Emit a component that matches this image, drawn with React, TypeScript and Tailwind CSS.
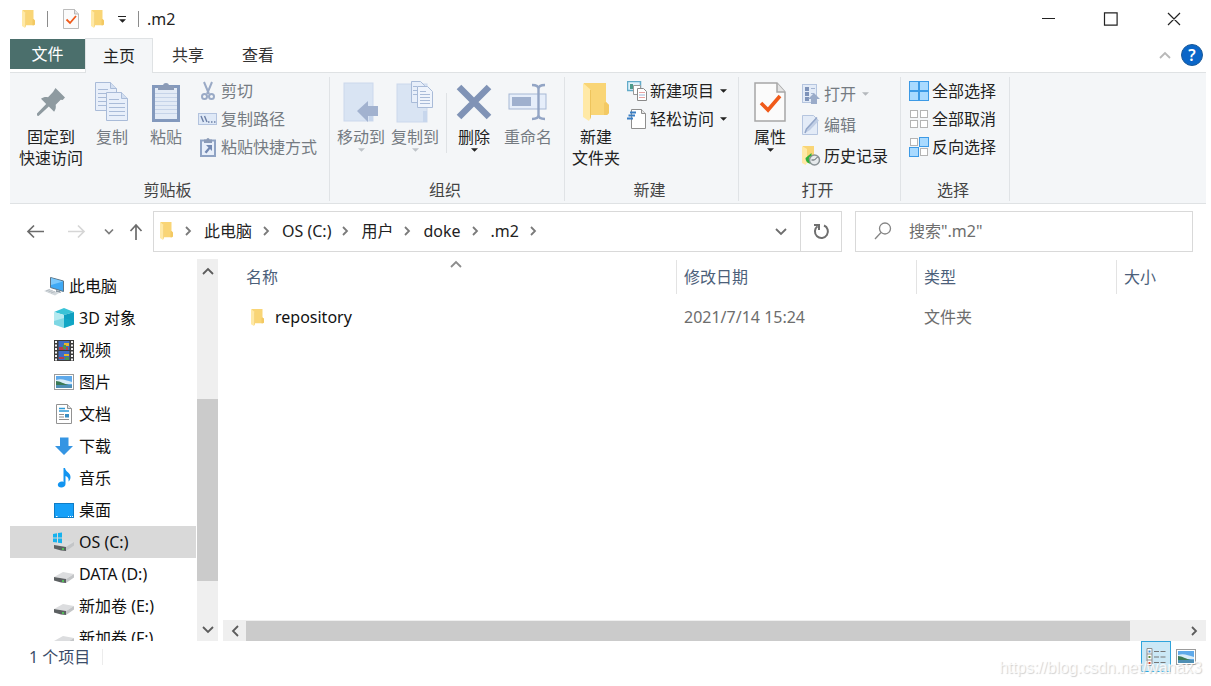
import type { ReactNode } from "react";

const Folder = ({ className = "w-4 h-5" }: { className?: string }) => (
  <svg viewBox="0 0 26 38" preserveAspectRatio="none" className={className}>
    <path d="M1 0h22v19l3 3v8l-2 2H6L1 28z" fill="#f9d576" />
    <path d="M23 19l3 3v8l-2 2h-3V20z" fill="#f3c963" />
    <path d="M0 0l8 7v27l-2 4-6-4z" fill="#ffe9a6" />
    <path d="M7 6.500l1 .5v27l-1 2.500z" fill="#eec45c" />
  </svg>
);

const CheckPage = ({ className = "w-4 h-5" }: { className?: string }) => (
  <svg viewBox="0 0 32 40" preserveAspectRatio="none" className={className}>
    <path d="M1 1h22l8 9v29H1z" fill="#fbfbfb" stroke="#a6a6a6" strokeWidth="1.500" />
    <path d="M23 1v9h8" fill="#e4e4e4" stroke="#a6a6a6" strokeWidth="1.500" />
    <path d="M7 21l7 7 12-14" fill="none" stroke="#f05a1a" strokeWidth="3.600" />
  </svg>
);

const Pin = () => (
  <svg viewBox="0 0 28 28" className="w-7 h-7">
    <path d="M18.500 0L28 9.500l-2.300 2.500-2-.2-5 5c.4 2.600 0 4.800-1.600 7l-5.300-5.200L1.500 28 0 27.500v-2l9.200-9.600L4 10.800c2-1.600 4.400-2.200 7-1.600l5-5.200z" fill="#8e9aa0" />
  </svg>
);

const Sheet = ({ x, y }: { x: number; y: number }) => (
  <g transform={`translate(${x} ${y})`}>
    <path d="M.5.5h15l6 6v22H.5z" fill="#e8effa" stroke="#a9bbd8" />
    <path d="M15.500.5v6h6" fill="#d3dff1" stroke="#a9bbd8" />
    <path d="M3 7.500h10M3 11.500h16M3 15.500h16M3 19.500h16M3 23.500h16" stroke="#a9bbd8" />
  </g>
);

const Copy = () => (
  <svg viewBox="0 0 34 40" className="w-[34px] h-10">
    <Sheet x={0} y={0} />
    <Sheet x={11} y={10} />
  </svg>
);

const Paste = () => (
  <svg viewBox="0 0 30 40" className="w-[30px] h-10">
    <rect x="2.500" y="4.500" width="25" height="34" fill="#e3ebf6" stroke="#8399bd" strokeWidth="3" />
    <path d="M4 11.500h22M4 15.500h22M4 19.500h22M4 23.500h22M4 27.500h22M4 31.500h22" stroke="#c5d3e8" />
    <path d="M7 8V4h5a3 3 0 0 1 6 0h5v4z" fill="#8b9bb7" />
  </svg>
);

const Scissors = () => (
  <svg viewBox="0 0 14 20" className="w-3.5 h-5" fill="none" stroke="#9aaac6">
    <path d="M3 1l5 12M11 1L6 13" strokeWidth="2" />
    <circle cx="3.500" cy="15.500" r="2.500" strokeWidth="2" />
    <circle cx="10.500" cy="15.500" r="2.500" strokeWidth="2" />
  </svg>
);

const CopyPath = () => (
  <svg viewBox="0 0 20 14" className="w-5 h-3.5">
    <rect x=".5" y="1.500" width="18" height="11" fill="#dfe9f7" stroke="#b3c3de" />
    <path d="M3 4l2.500 6M6.500 4L9 10" stroke="#6c7fa5" strokeWidth="1.400" />
    <path d="M10 10h1.500M13 10h1.500M16 10h1.500" stroke="#6c7fa5" strokeWidth="1.500" />
  </svg>
);

const PasteShortcut = () => (
  <svg viewBox="0 0 16 20" className="w-4 h-5">
    <rect x="1" y="3.500" width="14" height="15.500" fill="#e8effa" stroke="#8fa3c4" strokeWidth="2" />
    <path d="M4 6V2.500h2.500a1.500 1.500 0 0 1 3 0H12V6z" fill="#8b9bb7" />
    <path d="M6 8h6v6l-2-2-3.500 4.500-2-1.500 4-4.500z" fill="#7389b2" />
  </svg>
);

const MoveTo = () => (
  <svg viewBox="0 0 36 40" className="w-9 h-10">
    <rect x="1" y="1" width="29" height="38" fill="#d9e4f3" stroke="#cbd8ec" />
    <path d="M26 26h4v13h-4z" fill="#c7d6ec" />
    <path d="M14 29l11-10v5h10v10H25v6z" fill="#a2b2cf" />
  </svg>
);

const CopyTo = () => (
  <svg viewBox="0 0 38 42" className="w-[38px] h-[42px]">
    <rect x="1" y="3" width="30" height="38" fill="#d9e4f3" stroke="#cbd8ec" />
    <path d="M27 30h4v11h-4z" fill="#c7d6ec" />
    <path d="M15.500.5h9l4 4v17h-13z" fill="#e8effa" stroke="#a9bbd8" />
    <path d="M21.500 5.500h10l5 5v16h-15z" fill="#eff4fc" stroke="#a9bbd8" />
    <path d="M17 5.500h4M17 9.500h4M17 13.500h4M24 10.500h6M24 13.500h10M24 16.500h10M24 19.500h10M24 22.500h10" stroke="#a9bbd8" />
  </svg>
);

const Delete = () => (
  <svg viewBox="0 0 36 36" className="w-9 h-9">
    <path d="M3 3l30 30M33 3L3 33" stroke="#8093b6" strokeWidth="6.500" />
  </svg>
);

const Rename = () => (
  <svg viewBox="0 0 40 38" className="w-10 h-[38px]">
    <rect x="1" y="11" width="37" height="15" fill="#e6eefa" stroke="#a6b7d4" />
    <rect x="4" y="14" width="19" height="9" fill="#9fb0ce" />
    <path d="M24 2c4 0 6.500.6 6.500 4v26c0 3.400-2.500 4-6.500 4M37 2c-4 0-6.500.6-6.500 4v26c0 3.400 2.500 4 6.500 4" fill="none" stroke="#93a5c5" strokeWidth="2.400" />
  </svg>
);

const NewItem = () => (
  <svg viewBox="0 0 20 20" className="w-5 h-5">
    <path d="M.5.5h13v9H.5z" fill="#dff2fb" stroke="#62abc9" strokeWidth="1.500" />
    <path d="M3 3h3v5H3z" fill="#4a9a8a" />
    <path d="M6.500 4.500h7v9h-7z" fill="#fff" stroke="#9a9a9a" />
    <path d="M10.500 7.500h6l3 3v9h-9z" fill="#fff" stroke="#8a8a8a" />
    <path d="M12 11.500h6M12 16.500h6" stroke="#e9a3a3" />
    <path d="M12 14h6" stroke="#9db7da" />
  </svg>
);

const EasyAccess = () => (
  <svg viewBox="0 0 20 22" className="w-5 h-[22px]">
    <path d="M4.500 1.500h10l4 4v15h-14z" fill="#fff" stroke="#8e8e8e" />
    <path d="M14.500 1.500v4h4" fill="#e6e6e6" stroke="#8e8e8e" />
    <path d="M3 4.500h6M1.500 7.500h6.500M0 10.500h6" stroke="#3b7fc4" strokeWidth="2" />
  </svg>
);

const Open = () => (
  <svg viewBox="0 0 18 22" className="w-[18px] h-[22px]">
    <rect x=".5" y="1.500" width="14" height="18" fill="#e3ebf7" stroke="#b5c5df" />
    <path d="M3 4h4v4H3zM3 9h4v4H3zM3 14h4v4H3z" fill="#7e93b9" />
    <path d="M9 5.500h4M9 10.500h3" stroke="#a4b5d2" />
    <path d="M12 10l6 6h-3v5H9v-5H6z" fill="#9aabc9" />
  </svg>
);

const Edit = () => (
  <svg viewBox="0 0 18 20" className="w-[18px] h-5">
    <path d="M.5.5h11l4 4v15H.5z" fill="#e3ebf7" stroke="#b5c5df" />
    <path d="M3 18l2-5L14 3l3 2.500L8 15z" fill="#c0cee5" />
    <path d="M3 18l1.500-4L15 2.500" stroke="#93a6c8" fill="none" strokeWidth="1.500" />
  </svg>
);

const History = () => (
  <svg viewBox="0 0 19 20" className="w-[19px] h-5">
    <path d="M1 0h11v17H1z" fill="#f9d576" />
    <path d="M0 0l5 3v14l-1.500 2L0 17z" fill="#ffe9a6" />
    <circle cx="12.500" cy="14" r="5" fill="#e6eaec" stroke="#8a9296" strokeWidth="1.500" />
    <path d="M12.500 14l3-3M12.500 14h-3" fill="none" stroke="#51595d" />
    <path d="M3.500 12l6-5v3c-3 .5-3.500 3.500-1 8-3.500-1-5-3-5-6z" fill="#2fae3c" />
  </svg>
);

/* Four tiles; `on` marks the ones drawn in blue */
const Tiles = ({ on }: { on: boolean[] }) => (
  <svg viewBox="0 0 20 20" className="w-5 h-5">
    {on.map((lit, i) => {
      const x = (i % 2) * 10;
      const y = i < 2 ? 0 : 10;
      return lit ? (
        <rect key={i} x={x + 0.5} y={y + 0.5} width="9" height="9" fill="#a9daff" stroke="#3c9ae6" />
      ) : (
        <rect key={i} x={x + 1.5} y={y + 1.5} width="7" height="7" fill="#fff" stroke="#b4b4b4" />
      );
    })}
  </svg>
);

const Chevron = ({ dir = "down", className = "" }: { dir?: "up" | "down" | "left" | "right"; className?: string }) => {
  const d = {
    up: "M1 9l5-5 5 5",
    down: "M1 4l5 5 5-5",
    left: "M9 1L4 6l5 5",
    right: "M4 2l4 4-4 4",
  }[dir];
  return (
    <svg viewBox="0 0 12 12" className={`w-3 h-3 ${className}`} fill="none" stroke="currentColor" strokeWidth="1.800">
      <path d={d} />
    </svg>
  );
};

const Caret = ({ className = "" }: { className?: string }) => (
  <svg viewBox="0 0 8 4" className={`w-[7px] h-1 ${className}`}>
    <path d="M0 0h8L4 4z" fill="currentColor" />
  </svg>
);

const PictureIcon = () => (
  <svg viewBox="0 0 20 16" className="w-5 h-4">
    <rect x=".5" y=".5" width="19" height="15" fill="#fff" stroke="#9c9c9c" />
    <path d="M2 2h16v12H2z" fill="#5ea9ea" />
    <path d="M2 6c5-2 10 0 16 2v2H2z" fill="#d8ecf8" />
    <path d="M2 7c4 0 8 3 13 4H2z" fill="#3c7a55" />
    <path d="M2 11h16v3H2z" fill="#4f8fb4" />
  </svg>
);

const PcIcon = () => (
  <svg viewBox="0 0 20 20" className="w-5 h-5">
    <path d="M6.500 1.500l13 3.500v10.500l-13-4z" fill="#3fa9f5" stroke="#5c7486" />
    <path d="M7 2l12 3.500L7 9z" fill="#7cc8fb" />
    <path d="M12 14l4 1 1 2-5-1z" fill="#8a98a2" />
    <path d="M0 15l5-2 10 4-4 2.500z" fill="#d2d8dc" />
    <path d="M2 15l4-1.500M4.500 16l4-1.500M7 17l4-1.500" stroke="#aab2b8" strokeWidth=".7" />
  </svg>
);

const CubeIcon = () => (
  <svg viewBox="0 0 20 20" className="w-5 h-5">
    <path d="M0 4l10-4 10 4-10 3z" fill="#39c3d7" />
    <path d="M0 4l10 3v13L0 16.500z" fill="#b5eaf0" />
    <path d="M20 4L10 7v13l10-3.500z" fill="#0e9fc0" />
    <path d="M0 13l10-3 10 3v3.500L10 20 0 16.500z" fill="#17b5cf" opacity=".35" />
  </svg>
);

const VideoIcon = () => (
  <svg viewBox="0 0 20 21" className="w-5 h-[21px]">
    <path d="M0 0h20v21H0z" fill="#3c3c3c" />
    <path d="M2 1v20M18 1v20" stroke="#f4f4f4" strokeWidth="2" strokeDasharray="2 1.500" />
    <path d="M4.500 1h11v9h-11zM4.500 11h11v9h-11z" fill="#3f6cc4" />
    <path d="M10 3h5v3h-5zM10 14h5v2h-5z" fill="#e8b52d" />
    <path d="M5 7h4l2 3H5zM5 17h5v2H5zM12 7h2v3h-2z" fill="#b8404a" />
    <path d="M9 5h3v4H9zM11 17h4v3h-4z" fill="#4b9650" />
  </svg>
);

const DocIcon = () => (
  <svg viewBox="0 0 16 20" className="w-4 h-5">
    <path d="M.5.5h11l4 4v15H.5z" fill="#fff" stroke="#929292" />
    <path d="M11.500.5v4h4" fill="#e2e2e2" stroke="#929292" />
    <path d="M3 4.500h6M3 7h10" stroke="#2e9bd8" strokeWidth="1.500" />
    <path d="M3 10.500h5M3 13h5M3 15.500h10" stroke="#8f8f8f" />
    <path d="M9 10h4v3.500H9z" fill="#3a8fc4" />
  </svg>
);

const DownloadIcon = () => (
  <svg viewBox="0 0 18 18" className="w-[18px] h-[18px]">
    <path d="M5 .5h8.500V9H18l-9 9-9-9h5z" fill="#3595e3" />
  </svg>
);

const MusicIcon = () => (
  <svg viewBox="0 0 14 20" className="w-3.5 h-5">
    <path d="M6.500 0H8c.5 4 5.500 4.500 5.500 9 0 2-.8 3.500-2 4.500.6-3-.6-4.800-3-5.500v8c0 2-1.800 3.500-4.200 3.500C2 19.500.8 18.300.8 16.800c0-2 2-3.300 4-3.300.6 0 1.200.1 1.700.4z" fill="#1294f0" />
  </svg>
);

const DesktopIcon = () => (
  <svg viewBox="0 0 20 15" className="w-5 h-[15px]">
    <rect x=".5" y=".5" width="19" height="14" fill="#16a0f8" stroke="#0f7dc6" />
    <path d="M2 13.500h1.500M14 13.500h1M16 13.500h1M18 13.500h1" stroke="#fff" />
  </svg>
);

const DriveIcon = ({ system = false }: { system?: boolean }) => (
  <svg viewBox="0 0 22 20" className="w-[22px] h-5">
    <path d="M1 13l9-5 11 2-8 5z" fill="#dcdddf" />
    <path d="M1 13l12 2v4l-5-.5-7-2z" fill="#5c6062" />
    <path d="M13 15l8-5v3.500L13 19z" fill="#c3c5c7" />
    <path d="M9 17h2" stroke="#4fdc55" strokeWidth="1.500" />
    {system && <path d="M0 2l4-.7V5.500H0zM5 1.100L9 .5v5H5zM0 6.500h4v4l-4-.6zM5 6.500h4v4.800l-4-.6z" fill="#16b2ee" />}
  </svg>
);

type BigButtonProps = { icon: ReactNode; label: ReactNode; disabled?: boolean; caret?: boolean; width?: string };

const BigButton = ({ icon, label, disabled, caret, width = "w-[54px]" }: BigButtonProps) => (
  <button disabled={disabled} className={`${width} flex flex-col items-center shrink-0 text-center leading-[21px] whitespace-nowrap text-[#222] disabled:text-[#757b82]`}>
    <span className="h-[50px] flex items-center justify-center">{icon}</span>
    <span>{label}</span>
    {caret && <Caret className={disabled ? "text-[#bfc3c8]" : "text-[#222]"} />}
  </button>
);

type SmallButtonProps = { icon: ReactNode; label: string; disabled?: boolean; caret?: boolean; height?: string };

const SmallButton = ({ icon, label, disabled, caret, height = "h-7" }: SmallButtonProps) => (
  <button disabled={disabled} className={`${height} flex items-center whitespace-nowrap text-[#222] disabled:text-[#757b82]`}>
    <span className="w-5 mr-[3px] flex justify-center">{icon}</span>
    {label}
    {caret && <Caret className={disabled ? "ml-1.5 text-[#b4b8bd]" : "ml-1.5"} />}
  </button>
);

const Group = ({ title, width, children }: { title: string; width: string; children: ReactNode }) => (
  <section className={`${width} shrink-0 flex flex-col justify-between border-r border-[#e0e3e6]`}>
    <div className="flex pl-1">{children}</div>
    <h2 className="text-center leading-5 pb-px pr-1 text-[#444]">{title}</h2>
  </section>
);

const Ribbon = () => (
  <div className="flex h-[132px] bg-[#f4f6f8] border-y border-[#dfe2e4] pt-1 pb-0.5 overflow-hidden">
    <Group title="剪贴板" width="w-[320px]">
      <BigButton width="w-[74px]" icon={<Pin />} label={<>固定到<br />快速访问</>} />
      <BigButton width="w-12" disabled icon={<Copy />} label="复制" />
      <BigButton width="w-[60px]" disabled icon={<Paste />} label="粘贴" />
      <div className="pl-0.5">
        <SmallButton disabled icon={<Scissors />} label="剪切" />
        <SmallButton disabled icon={<CopyPath />} label="复制路径" />
        <SmallButton disabled icon={<PasteShortcut />} label="粘贴快捷方式" />
      </div>
    </Group>
    <Group title="组织" width="w-[235px]">
      <BigButton disabled caret icon={<MoveTo />} label="移动到" />
      <BigButton disabled caret icon={<CopyTo />} label="复制到" />
      <div className="w-px h-[60px] mt-4 ml-1 bg-[#dfe2e5]" />
      <BigButton caret icon={<Delete />} label="删除" />
      <BigButton disabled icon={<Rename />} label="重命名" />
    </Group>
    <Group title="新建" width="w-[174px]">
      <BigButton icon={<Folder className="w-[26px] h-[38px]" />} label={<>新建<br />文件夹</>} />
      <div className="pl-1">
        <SmallButton caret icon={<NewItem />} label="新建项目" />
        <SmallButton caret icon={<EasyAccess />} label="轻松访问" />
      </div>
    </Group>
    <Group title="打开" width="w-[162px]">
      <BigButton caret icon={<CheckPage className="w-8 h-10" />} label="属性" />
      <div className="pl-1 pt-px">
        <SmallButton height="h-[31px]" disabled caret icon={<Open />} label="打开" />
        <SmallButton height="h-[31px]" disabled icon={<Edit />} label="编辑" />
        <SmallButton height="h-[31px]" icon={<History />} label="历史记录" />
      </div>
    </Group>
    <Group title="选择" width="w-[109px]">
      <div className="pl-1">
        <SmallButton icon={<Tiles on={[true, true, true, true]} />} label="全部选择" />
        <SmallButton icon={<Tiles on={[false, false, false, false]} />} label="全部取消" />
        <SmallButton icon={<Tiles on={[false, true, true, false]} />} label="反向选择" />
      </div>
    </Group>
  </div>
);

const TitleBar = () => (
  <header className="h-[38px] flex items-center justify-between">
    <div className="flex items-center pl-3">
      <Folder className="w-[13px] h-[18px]" />
      <span className="w-px h-4 ml-3 bg-[#8c8c8c]" />
      <button aria-label="属性" className="ml-[15px]"><CheckPage /></button>
      <button aria-label="新建文件夹" className="ml-3"><Folder className="w-[13px] h-[18px]" /></button>
      <button aria-label="自定义快速访问工具栏" className="ml-3.5 flex flex-col items-center gap-0.5 text-[#222]">
        <span className="w-2 h-px bg-[#222]" />
        <Caret />
      </button>
      <span className="w-px h-4 ml-3 bg-[#8c8c8c]" />
      <h1 className="ml-2 text-[#222]">.m2</h1>
    </div>
    <svg viewBox="0 0 140 14" className="w-[140px] h-3.5 mr-[25px]" fill="none" stroke="#222" strokeWidth="1.200">
      <path d="M1 6.500h13M63.500.9h12.600v12.200H63.500zM127 1l12 12M139 1l-12 12" />
    </svg>
  </header>
);

const Tabs = () => (
  <nav className="h-[34px] flex items-center justify-between">
    <div className="flex self-stretch">
      <button className="w-[75px] h-[30px] mt-px bg-[#4b6f6c] text-white">文件</button>
      <button className="w-[68px] h-[35px] relative z-10 border border-b-0 border-[#dfe2e4] bg-[#f4f6f8] text-[#222]">主页</button>
      <button className="w-[70px] text-[#333]">共享</button>
      <button className="w-[70px] text-[#333]">查看</button>
    </div>
    <div className="flex items-center gap-2.5 pr-[3px]">
      <Chevron dir="up" className="text-[#b8b8b8]" />
      <button className="w-[22px] h-[22px] rounded-full border border-[#1b5a99] bg-[#0a66c8] text-white leading-5 font-semibold">?</button>
    </div>
  </nav>
);

const crumbs = ["此电脑", "OS (C:)", "用户", "doke", ".m2"];

const AddressRow = () => (
  <div className="flex items-center h-[54px] pr-[13px]">
    <svg viewBox="0 0 143 40" className="w-[143px] h-10 shrink-0" fill="none" strokeWidth="1.700">
      <path d="M18 20.500h16M24 14.500l-6 6 6 6" stroke="#6c6c6c" />
      <path d="M58 20.500h16M68 14.500l6 6-6 6" stroke="#d6d6d6" />
      <path d="M95 18.500l4 4 4-4" stroke="#7c7c7c" />
      <path d="M126 29V14M120.500 20l5.500-6 5.500 6" stroke="#6c6c6c" />
    </svg>
    <div className="flex-1 h-[41px] flex items-center border border-[#d9d9d9]">
      <Folder className="w-[13px] h-[18px] ml-1.5" />
      <Chevron dir="right" className="ml-[9px] text-[#7a7a7a]" />
      {crumbs.map((crumb) => (
        <button key={crumb} className="flex items-center gap-2 ml-2.5 text-[#222] whitespace-nowrap">
          {crumb}
          <Chevron dir="right" className="text-[#7a7a7a]" />
        </button>
      ))}
      <Chevron className="ml-auto mr-[13px] text-[#6e6e6e]" />
      <button aria-label="刷新" className="w-[41px] self-stretch flex items-center justify-center border-l border-[#d9d9d9]">
        <svg viewBox="0 0 18 18" className="w-[18px] h-[18px]" fill="none" stroke="#6e6e6e" strokeWidth="2">
          <path d="M12 3.500a6.500 6.500 0 1 1-6.500.8M2 3h5v5" />
        </svg>
      </button>
    </div>
    <label className="w-[338px] h-[41px] ml-[13px] flex items-center border border-[#d9d9d9]">
      <svg viewBox="0 0 18 18" className="w-[18px] h-[18px] ml-[18px]" fill="none" stroke="#858585" strokeWidth="1.300">
        <circle cx="11" cy="6.500" r="5.500" />
        <path d="M7 10.500L1 17" />
      </svg>
      <input aria-label="搜索" placeholder={'搜索".m2"'} className="flex-1 min-w-0 ml-[17px] outline-none placeholder:text-[#6d6d6d]" />
    </label>
  </div>
);

const places = [
  { name: "3D 对象", icon: <CubeIcon /> },
  { name: "视频", icon: <VideoIcon /> },
  { name: "图片", icon: <PictureIcon /> },
  { name: "文档", icon: <DocIcon /> },
  { name: "下载", icon: <DownloadIcon /> },
  { name: "音乐", icon: <MusicIcon /> },
  { name: "桌面", icon: <DesktopIcon /> },
  { name: "OS (C:)", icon: <DriveIcon system />, selected: true },
  { name: "DATA (D:)", icon: <DriveIcon /> },
  { name: "新加卷 (E:)", icon: <DriveIcon /> },
  { name: "新加卷 (F:)", icon: <DriveIcon /> },
];

const Sidebar = () => (
  <aside className="w-[209px] shrink-0 flex">
    <ul className="w-[186px] pt-3 overflow-hidden text-[#111]">
      <li className="h-8 flex items-center pl-[34px] gap-[5px]">
        <PcIcon />
        此电脑
      </li>
      {places.map((place) => (
        <li key={place.name} className={`h-8 flex items-center pl-[43px] ${place.selected ? "bg-[#d9d9d9]" : ""}`}>
          <span className="w-[22px] mr-1 flex justify-center">{place.icon}</span>
          {place.name}
        </li>
      ))}
    </ul>
    <div className="w-[21px] ml-px mt-px flex flex-col items-center bg-[#efefef] text-[#5c5c5c]">
      <Chevron dir="up" className="mt-1.5" />
      <div className="w-full h-[182px] mt-[122px] bg-[#cbcbcb]" />
      <Chevron className="mt-auto mb-1.5" />
    </div>
  </aside>
);

const FileList = () => (
  <main className="flex-1 min-w-0 ml-1 flex flex-col">
    <table className="w-full table-fixed text-left">
      <thead className="text-[#4c607a]">
        <tr className="h-9">
          <th className="relative pl-[23px] pt-0.5 font-normal">
            <Chevron dir="up" className="absolute top-0 left-1/2 text-[#8c8c8c]" />
            名称
          </th>
          <th className="w-60 pt-0.5 font-normal"><div className="border-l border-[#e3e3e3] pl-[7px] leading-[34px]">修改日期</div></th>
          <th className="w-[200px] pt-0.5 font-normal"><div className="border-l border-[#e3e3e3] pl-[7px] leading-[34px]">类型</div></th>
          <th className="w-[90px] pt-0.5 font-normal"><div className="border-l border-[#e3e3e3] pl-[7px] leading-[34px]">大小</div></th>
        </tr>
      </thead>
      <tbody>
        <tr className="h-[46px] text-[#6d6d6d]">
          <td className="pl-7 text-[#111]">
            <div className="flex items-center gap-[11px]">
              <Folder className="w-[13px] h-[17px]" />
              repository
            </div>
          </td>
          <td className="pl-2">2021/7/14 15:24</td>
          <td className="pl-2">文件夹</td>
          <td />
        </tr>
      </tbody>
    </table>
    <div className="mt-auto h-[21px] flex items-center bg-[#efefef] text-[#5c5c5c]">
      <span className="w-[23px] flex justify-center"><Chevron dir="left" /></span>
      <div className="flex-1 h-5 mr-[58px] bg-[#cbcbcb]" />
      <Chevron dir="right" className="mr-1.5" />
    </div>
  </main>
);

const StatusBar = () => (
  <footer className="relative h-[45px] flex items-start pr-2.5">
    <div className="h-[31px] flex items-center pl-[19px] text-[#3c4d69]">
      1 个项目
      <span className="w-px h-4 ml-3 bg-[#ececec]" />
    </div>
    <button aria-label="详细信息" className="ml-auto w-[30px] h-[31px] flex items-center justify-center border border-[#2fa4dc] bg-[#cbe8f6]">
      <svg viewBox="0 0 20 18" className="w-5 h-[18px]">
        <path d="M1 .5h5v17H1zM1 6h5M1 12h5" fill="#fff" stroke="#8e8e8e" />
        <path d="M2.500 2.500h2v2h-2z" fill="#3e8ad0" />
        <path d="M2.500 8h2v2h-2z" fill="#5c8a3a" />
        <path d="M2.500 14h2v2h-2z" fill="#d5472e" />
        <path d="M8 3.500h5M14.500 3.500h5M8 9h5M14.500 9h5M8 14.500h5M14.500 14.500h5" stroke="#777" />
      </svg>
    </button>
    <button aria-label="大缩略图" className="ml-[5px] h-[31px] flex items-center"><PictureIcon /></button>
    <p className="absolute right-1 bottom-2 leading-5 font-['Liberation_Sans',sans-serif] text-white/80 [text-shadow:1px_1px_1px_#d0d0d0]">
      https://blog.csdn.net/wanax3
    </p>
  </footer>
);

const App = () => {
  return (
    <div className="h-screen flex flex-col bg-white pl-2.5 pr-[5px] overflow-hidden text-base font-['Noto_Sans','Noto_Sans_CJK_SC',sans-serif]">
      <TitleBar />
      <Tabs />
      <Ribbon />
      <AddressRow />
      <div className="flex-1 min-h-0 flex">
        <Sidebar />
        <FileList />
      </div>
      <StatusBar />
    </div>
  );
};

export default App;
